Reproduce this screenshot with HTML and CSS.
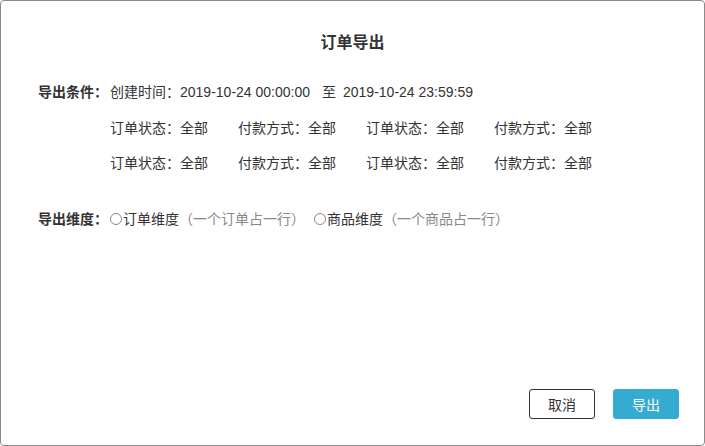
FILE: index.html
```html
<!DOCTYPE html>
<html lang="zh">
<head>
    <meta charset="UTF-8">
    <title>订单导出</title>
    <link rel="stylesheet" href="styles.css">
</head>
<body>

<div class="dialog">
    <h2 class="dialog-title">订单导出</h2>

    <!-- 导出条件 -->
    <div class="row">
        <span class="label">导出条件：</span>
        <div class="conditions">
            <div class="time-line">
                创建时间：2019-10-24 00:00:00<span class="to">至</span>2019-10-24 23:59:59
            </div>
            <div class="cond-grid">
                <span>订单状态：全部</span>
                <span>付款方式：全部</span>
                <span>订单状态：全部</span>
                <span>付款方式：全部</span>
                <span>订单状态：全部</span>
                <span>付款方式：全部</span>
                <span>订单状态：全部</span>
                <span>付款方式：全部</span>
            </div>
        </div>
    </div>

    <!-- 导出维度 -->
    <div class="row dimension">
        <span class="label">导出维度：</span>
        <label class="radio"><i class="circle"></i>订单维度<em>（一个订单占一行）</em></label>
        <label class="radio"><i class="circle"></i>商品维度<em>（一个商品占一行）</em></label>
    </div>

    <div class="footer">
        <button class="btn btn-cancel">取消</button>
        <button class="btn btn-primary">导出</button>
    </div>
</div>

</body>
</html>
```

FILE: styles.css
```css
html, body {
    margin: 0;
    padding: 0;
    background-color: #fff;
}

body {
    font-family: "Liberation Sans", "Noto Sans CJK SC", sans-serif;
    font-size: 14px;
    color: #333;
}

.dialog {
    box-sizing: border-box;
    width: 705px;
    height: 446px;
    border: 1px solid #8a8a8a;
    border-radius: 4px;
    display: flex;
    flex-direction: column;
    padding: 0 25px 26px 25px;
}

.dialog-title {
    margin: 31px 0 28px;
    font-size: 16px;
    font-weight: bold;
    line-height: 22px;
    text-align: center;
    color: #333;
}

.row {
    display: flex;
    line-height: 20px;
    padding-left: 12px;
}

.label {
    width: 72px;
    flex-shrink: 0;
    font-weight: bold;
}

.conditions {
    display: flex;
    flex-direction: column;
    gap: 16px;
}

.to {
    margin: 0 7px 0 12px;
}

.cond-grid {
    display: grid;
    grid-template-columns: repeat(4, 128px);
    row-gap: 15px;
}

.dimension {
    margin-top: 36px;
}

.radio {
    display: flex;
    align-items: center;
    margin-right: 9px;
}

.circle {
    box-sizing: border-box;
    width: 12px;
    height: 12px;
    border: 1px solid #888;
    border-radius: 50%;
    margin-right: 1px;
}

.radio em {
    font-style: normal;
    color: #888;
}

.footer {
    margin-top: auto;
    display: flex;
    justify-content: flex-end;
    gap: 18px;
}

.btn {
    box-sizing: border-box;
    width: 66px;
    height: 30px;
    border-radius: 3px;
    font-family: inherit;
    font-size: 14px;
    cursor: pointer;
}

.btn-cancel {
    background-color: #fff;
    border: 1px solid #333;
    color: #333;
}

.btn-primary {
    background-color: #36abd1;
    border: 1px solid #36abd1;
    color: #fff;
}
```
